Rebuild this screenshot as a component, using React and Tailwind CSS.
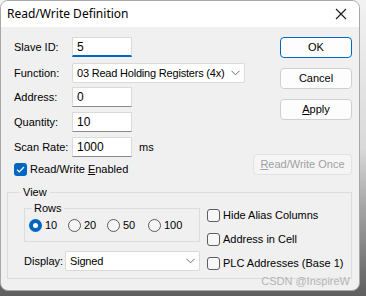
import React from 'react';

const font = { fontFamily: '"Liberation Sans", Arial, sans-serif' };

const Chevron = () => (
  <svg width="9" height="6" viewBox="0 0 9 6" className="shrink-0">
    <path d="M0.5 0.8 L4.5 4.8 L8.5 0.8" fill="none" stroke="#6b6b6b" strokeWidth="1" />
  </svg>
);

const Input = ({ value, focused, w = 'w-[60px]' }) => (
  <div
    className={`${w} h-[20px] shrink-0 bg-white border border-[#dadada] flex items-center pl-[4px] text-[12px] text-black ${
      focused ? 'border-b-2 border-b-[#0067c0]' : 'border-b-[#8a8a8a]'
    }`}
  >
    {value}
  </div>
);

const Select = ({ value, w }) => (
  <div className={`${w} h-[20px] shrink-0 bg-white border border-[#dadada] rounded-[2px] flex items-center pl-[4px] pr-[4px] text-[11px] text-black whitespace-nowrap`}>
    <span className="flex-1 tracking-[-0.2px]">{value}</span>
    <Chevron />
  </div>
);

const Check = ({ checked, label }) => (
  <div className="flex items-center h-[14px] whitespace-nowrap">
    {checked ? (
      <div className="w-[13px] h-[13px] shrink-0 rounded-[3px] bg-[#0067c0] flex items-center justify-center">
        <svg width="9" height="7" viewBox="0 0 9 7">
          <path d="M1 3.6 L3.3 5.8 L8 1" fill="none" stroke="white" strokeWidth="1.2" />
        </svg>
      </div>
    ) : (
      <div className="w-[13px] h-[13px] shrink-0 rounded-[3px] border border-[#5c5c5c] bg-[#f7f7f7]" />
    )}
    <span className="ml-[3px] text-[11px] text-black leading-none">{label}</span>
  </div>
);

const Radio = ({ checked, label, w }) => (
  <div className={`flex items-center whitespace-nowrap ${w}`}>
    {checked ? (
      <div className="w-[13px] h-[13px] shrink-0 rounded-full bg-[#0067c0] flex items-center justify-center">
        <div className="w-[5px] h-[5px] rounded-full bg-white" />
      </div>
    ) : (
      <div className="w-[13px] h-[13px] shrink-0 rounded-full border border-[#5c5c5c] bg-[#f5f5f5]" />
    )}
    <span className="ml-[3px] text-[11px] text-black leading-none">{label}</span>
  </div>
);

const Button = ({ children, primary, disabled, w = 'w-[72px]' }) => (
  <div
    className={`${w} h-[21px] rounded-[4px] flex items-center justify-center text-[11px] whitespace-nowrap ${
      primary
        ? 'bg-[#fdfdfd] border border-[#0067c0] text-black'
        : disabled
        ? 'bg-[#f5f5f5] border border-[#e2e2e2] text-[#a0a0a0]'
        : 'bg-[#fdfdfd] border border-[#d0d0d0] text-black'
    }`}
  >
    {children}
  </div>
);

const Row = ({ label, children, mt }) => (
  <div className={`flex items-center whitespace-nowrap ${mt}`}>
    <span className="w-[58px] shrink-0 text-[11px] text-black">{label}</span>
    {children}
  </div>
);

export default function App() {
  return (
    <div className="w-[366px] h-[296px] bg-gradient-to-b from-[#f2f2f2] via-[#d9d9d9] to-[#5e5e5e] overflow-hidden" style={font}>
      <div className="relative w-[360px] h-[291px] bg-[#f0f0f0] border border-[#a8a8a8] rounded-[8px] overflow-hidden">
        {/* title bar */}
        <div className="h-[26px] bg-white flex items-center justify-between pl-[6px] pr-[12px]">
          <span className="text-[12px] text-black" style={{ fontFamily: '"Noto Sans", "Open Sans", sans-serif' }}>
            Read/Write Definition
          </span>
          <svg width="12" height="12" viewBox="0 0 12 12">
            <path d="M1 1 L11 11 M11 1 L1 11" stroke="#1a1a1a" strokeWidth="1.1" />
          </svg>
        </div>

        {/* body */}
        <div className="px-[6px] pt-[10px]">
          <div className="flex">
            <div className="flex-1 pl-[7px]">
              <Row label="Slave ID:">
                <Input value="5" focused />
              </Row>
              <Row label="Function:" mt="mt-[6px]">
                <Select value="03 Read Holding Registers (4x)" w="w-[173px]" />
              </Row>
              <Row label="Address:" mt="mt-[4px]">
                <Input value="0" />
              </Row>
              <Row label="Quantity:" mt="mt-[5px]">
                <Input value="10" />
              </Row>
              <Row label="Scan Rate:" mt="mt-[5px]">
                <Input value="1000" />
                <span className="ml-[7px] text-[11px] text-black">ms</span>
              </Row>
              <div className="mt-[5px]">
                <Check
                  checked
                  label={
                    <>
                      Read/Write <span className="underline">E</span>nabled
                    </>
                  }
                />
              </div>
            </div>
            <div className="flex flex-col items-end pr-[1px]">
              <Button primary>OK</Button>
              <div className="mt-[10px]">
                <Button>Cancel</Button>
              </div>
              <div className="mt-[10px]">
                <Button>
                  <span className="underline">A</span>pply
                </Button>
              </div>
              <div className="mt-[34px]">
                <Button disabled w="w-[99px]">
                  <span className="underline">R</span>ead/Write Once
                </Button>
              </div>
            </div>
          </div>

          {/* View group */}
          <fieldset className="mt-[9px] border border-[#dcdcdc] h-[94px] mr-[1px]">
            <legend className="ml-[12px] px-[3px] text-[11px] text-black leading-[14px]">View</legend>
            <div className="flex pl-[16px]">
              <div className="pt-[2px]">
                <fieldset className="border border-[#dcdcdc] w-[176px] h-[41px]">
                  <legend className="ml-[7px] px-[2px] text-[11px] text-black leading-[14px]">Rows</legend>
                  <div className="flex items-center pl-[4px] pt-[4px]">
                    <Radio checked label="10" w="w-[39px]" />
                    <Radio label="20" w="w-[39px]" />
                    <Radio label="50" w="w-[41px]" />
                    <Radio label="100" />
                  </div>
                </fieldset>
                <div className="flex items-center mt-[9px] whitespace-nowrap">
                  <span className="w-[41px] shrink-0 text-[11px] text-black">Display:</span>
                  <Select value="Signed" w="w-[135px]" />
                </div>
              </div>
              <div className="ml-[7px] flex flex-col gap-[10px] pt-[9px]">
                <Check label="Hide Alias Columns" />
                <Check label="Address in Cell" />
                <Check label="PLC Addresses (Base 1)" />
              </div>
            </div>
          </fieldset>
        </div>

        <span className="absolute right-[9px] bottom-[1px] text-[11px] text-[#b4b4b4]">CSDN @InspireW</span>
      </div>
    </div>
  );
}
